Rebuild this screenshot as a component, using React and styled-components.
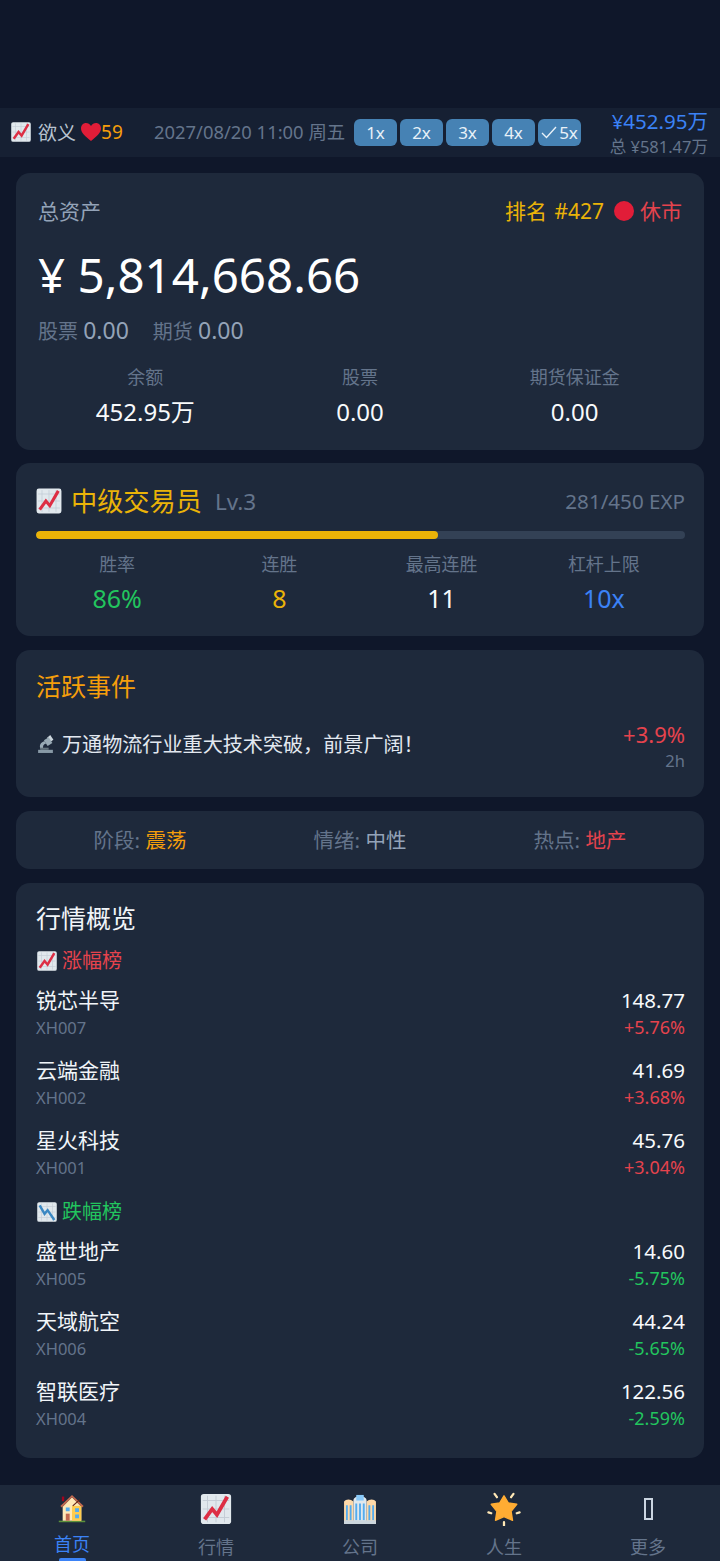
import React from 'react';
import styled, { createGlobalStyle } from 'styled-components';

const colors = {
  page: '#0f172a',
  bar: '#162033',
  card: '#1e293b',
  muted: '#64748b',
  slate: '#94a3b8',
  white: '#f1f5f9',
  gold: '#eab308',
  orange: '#f59e0b',
  red: '#e5434d',
  green: '#22c55e',
  blue: '#3b82f6',
  speed: '#4682b4',
};

const Global = createGlobalStyle`
  html, body { margin: 0; padding: 0; background: ${colors.page}; }
  body { font-family: "Noto Sans", "Noto Sans CJK SC", sans-serif; color: ${colors.white}; }
  * { box-sizing: border-box; }
`;

const Screen = styled.div`
  width: 720px; height: 1561px; display: flex; flex-direction: column; overflow: hidden;
  padding-top: 108px;
`;
const TopBar = styled.div`
  height: 49px; flex: none; background: ${colors.bar}; display: flex; align-items: center;
  padding: 0 12px 0 10px;
`;
const Player = styled.div`
  display: flex; align-items: center; gap: 6px; font-size: 19px; color: #b8c3d0; width: 144px; flex: none;
  padding-bottom: 2px;
`;
const Heart = styled.span`
  display: inline-flex; align-items: center; color: ${colors.orange}; margin-left: -1px;
`;
const GameDate = styled.div`
  font-size: 18.4px; color: ${colors.muted}; white-space: nowrap; width: 200px; flex: none; padding-bottom: 3px;
`;
const Speeds = styled.div`
  display: flex; gap: 3px; flex: none; padding-bottom: 1px;
`;
const Speed = styled.div`
  width: 43px; height: 27px; border-radius: 6px; background: ${colors.speed}; color: #e8f1f8;
  font-size: 17px; display: flex; align-items: center; justify-content: center; gap: 2px;
`;
const Funds = styled.div`
  margin-left: auto; text-align: right; display: flex; flex-direction: column; gap: 2px;
`;
const FundsMain = styled.div`
  font-size: 20.5px; line-height: 25px; color: ${colors.blue}; white-space: nowrap;
`;
const FundsTotal = styled.div`
  font-size: 16.5px; line-height: 21px; color: ${colors.muted}; white-space: nowrap;
`;

const Content = styled.div`
  flex: 1; padding: 16px 16px 0; display: flex; flex-direction: column; gap: 13.5px;
`;
const Card = styled.section`
  background: ${colors.card}; border-radius: 14px; padding: ${p => p.$pad || '20px'};
  height: ${p => p.$h}px; flex: none;
`;
const Between = styled.div`
  display: flex; align-items: center; justify-content: space-between;
`;
const Label = styled.div`
  font-size: 21px; line-height: 30px; color: ${colors.slate};
`;
const RankRow = styled.div`
  display: flex; align-items: center; gap: 10px; font-size: 21px; line-height: 30px;
`;
const Rank = styled.span`
  color: ${colors.gold}; word-spacing: 2px;
`;
const Closed = styled.span`
  display: inline-flex; align-items: center; gap: 6px; color: ${colors.red};
`;
const Dot = styled.i`
  width: 20px; height: 20px; border-radius: 50%; background: #e11d38; display: block;
`;
const Total = styled.div`
  font-size: 47.5px; line-height: 58px; margin-top: 20px; color: #fff; white-space: nowrap;
`;
const SubRow = styled.div`
  display: flex; gap: 24px; font-size: 20px; color: ${colors.muted}; margin-top: 11px; line-height: 30px;
`;
const SubValue = styled.span`
  color: ${colors.slate}; font-size: 23px;
`;
const Stats = styled.div`
  display: grid; grid-template-columns: repeat(${p => p.$n}, 1fr); margin-top: ${p => p.$top}px;
`;
const Stat = styled.div`
  text-align: center;
`;
const StatLabel = styled.div`
  font-size: 18px; line-height: 26px; color: ${colors.muted};
`;
const StatValue = styled.div`
  font-size: ${p => p.$size || 24}px; line-height: 32px; margin-top: ${p => p.$gap || 5}px; color: ${p => p.$color || '#f8fafc'};
`;
const LevelTitle = styled.div`
  display: flex; align-items: center; gap: 8px; margin-left: -1px;
`;
const LevelName = styled.span`
  font-size: 26.2px; line-height: 36px; color: ${colors.gold};
`;
const LevelNo = styled.span`
  font-size: 22.5px; color: ${colors.muted}; margin-left: 5px;
`;
const Exp = styled.span`
  font-size: 20.6px; color: ${colors.muted};
`;
const Track = styled.div`
  height: 8px; border-radius: 4px; background: #334155; margin-top: 12px; overflow: hidden;
`;
const Fill = styled.div`
  height: 100%; background: ${colors.gold}; border-radius: 4px;
`;
const SectionTitle = styled.h2`
  margin: 0; font-weight: 400; font-size: 25px; line-height: 34px; color: ${p => p.$color};
`;
const EventRow = styled.div`
  display: flex; justify-content: space-between; align-items: center; margin-top: 11px;
`;
const EventText = styled.div`
  display: flex; align-items: center; gap: 7px; font-size: 20.1px; color: #e2e8f0; height: 30px;
`;
const EventSide = styled.div`
  text-align: right; padding-top: 6px;
`;
const EventPct = styled.div`
  font-size: 22px; line-height: 28px; color: ${colors.red};
`;
const EventAge = styled.div`
  font-size: 16.5px; line-height: 26px; color: ${colors.muted};
`;
const MoodRow = styled.div`
  display: flex; justify-content: space-around; height: 100%; align-items: center; padding: 0 14px 2px;
  font-size: 20.5px; color: ${colors.muted};
`;
const MoodValue = styled.span`
  color: ${p => p.$color};
`;
const ListHead = styled.div`
  display: flex; align-items: center; gap: 4px; font-size: 20px; line-height: 30px; color: ${p => p.$color};
  margin-top: ${p => p.$top}px;
`;
const StockRow = styled.div`
  display: flex; justify-content: space-between; height: 70.4px; padding-top: 9px;
`;
const StockName = styled.div`
  font-size: 21px; line-height: 30px; color: #f1f5f9;
`;
const StockCode = styled.div`
  font-size: 16.5px; line-height: 25px; color: ${colors.muted};
`;
const StockSide = styled.div`
  text-align: right;
`;
const StockPrice = styled.div`
  font-size: 20.5px; line-height: 30px; color: #f8fafc;
`;
const StockPct = styled.div`
  font-size: 18px; line-height: 25px; color: ${p => p.$color};
`;
const Nav = styled.nav`
  height: 76px; flex: none; background: ${colors.card}; display: grid; grid-template-columns: repeat(5, 1fr);
`;
const NavItem = styled.div`
  position: relative; display: flex; flex-direction: column; align-items: center; padding-top: 7px;
  color: ${p => (p.$active ? colors.blue : colors.muted)};
`;
const NavIcon = styled.div`
  height: 34px; display: flex; align-items: center; justify-content: center;
`;
const NavLabel = styled.div`
  font-size: 18px; line-height: 24px; margin-top: ${p => (p.$active ? 6 : 9)}px;
`;
const NavMark = styled.i`
  position: absolute; left: 50%; bottom: 0; width: 27px; height: 3px; margin-left: -13px; border-radius: 2px 2px 0 0;
  background: ${colors.blue};
`;
const MissingGlyph = styled.i`
  display: block; width: 9px; height: 22px; border: 2px solid #cbd5e1;
`;

const Grid = () => (
  <g stroke="#c3ccd6" strokeWidth="1">
    <path d="M9 4v28M18 4v28M27 4v28M4 9h28M4 18h28M4 27h28" />
  </g>
);

const ChartUp = ({ size = 24 }) => (
  <svg width={size} height={size} viewBox="0 0 36 36">
    <rect x="2" y="2" width="32" height="32" rx="3" fill="#e1e8ed" />
    <Grid />
    <path d="M6 29l8-11 5 6 11-19" fill="none" stroke="#dd2e44" strokeWidth="4" strokeLinejoin="miter" />
  </svg>
);

const ChartDown = ({ size = 22 }) => (
  <svg width={size} height={size} viewBox="0 0 36 36">
    <rect x="2" y="2" width="32" height="32" rx="3" fill="#e1e8ed" />
    <Grid />
    <path d="M6 7l8 14 5-6 11 16" fill="none" stroke="#3b88c3" strokeWidth="4" />
  </svg>
);

const Scope = () => (
  <svg width="19" height="22" viewBox="0 0 36 36">
    <path d="M4 29h28v6H4z" fill="#8899a6" />
    <path d="M9 28c-4-7 0-14 8-15l2 4c-5 1-7 5-5 11z" fill="#99aab5" />
    <path d="M21 6l6-5 6 9-6 4z" fill="#ccd6dd" />
    <path d="M15 11l9-6 7 11-9 6z" fill="#99aab5" />
    <path d="M8 25h16v4H8z" fill="#66757f" />
  </svg>
);

const House = () => (
  <svg width="28" height="30" viewBox="0 0 36 36">
    <path d="M1 33h34v2H1z" fill="#5c913b" />
    <path d="M6 15L18 3l12 12v18H6z" fill="#ffe8b6" />
    <path d="M18 3L5 16l-2-2L18 0l15 14-2 2z" fill="#c1694f" />
    <path d="M18 14h12v19H18z" fill="#ffcc4d" />
    <path d="M10 24h5v9h-5z" fill="#c1694f" />
    <path d="M10 16h5v5h-5zM22 17h5v5h-5zM22 25h5v5h-5z" fill="#55acee" />
    <path d="M5 2h3v6H5z" fill="#a0041e" />
    <path d="M19 14l9-8" stroke="#662113" strokeWidth="1.5" />
  </svg>
);

const Office = () => (
  <svg width="34" height="30" viewBox="0 0 36 32">
    <path d="M1 8c2-3 7-3 10 0v24H1zM25 8c3-3 8-3 10 0v24H25z" fill="#ffd9a8" />
    <path d="M11 7c0-6 14-6 14 0v25H11z" fill="#e1e8ed" />
    <path d="M14 1h8v6h-8z" fill="#88c9f9" />
    <path d="M3 12h2v16H3zM7 12h2v16H7zM13 10h2v18h-2zM17 10h2v18h-2zM21 10h2v18h-2zM27 12h2v16h-2zM31 12h2v16h-2z" fill="#55acee" />
    <path d="M1 28h34v4H1z" fill="#ccd6dd" />
  </svg>
);

const Glow = () => (
  <svg width="34" height="34" viewBox="0 0 36 36">
    <path d="M18 4l4.500 7.500 9 1.500-6 7.500 1.500 9.500-9-4-9 4 1.500-9.500-6-7.500 9-1.500z" fill="#ffac33" stroke="#ffac33" strokeWidth="1.500" strokeLinejoin="round" />
    <path d="M18 32v3.500M1.500 21.500l3 1M34.500 21.500l-3 1M8 2l2.500 3.500M28 2l-2.500 3.500" stroke="#ffe8b6" strokeWidth="2.400" strokeLinecap="round" />
  </svg>
);

const Check = () => (
  <svg width="16" height="14" viewBox="0 0 16 14">
    <path d="M1 8l4.500 4.500L15 2" fill="none" stroke="#e8f1f8" strokeWidth="1.400" />
  </svg>
);

const HeartIcon = () => (
  <svg width="20" height="18" viewBox="0 0 20 18">
    <path d="M10 18C4 13 0 10 0 5.300C0 2.200 2.300 0 5 0c2 0 3.900 1 5 3 1.100-2 3-3 5-3 2.700 0 5 2.200 5 5.300C20 10 16 13 10 18z" fill="#e11d38" />
  </svg>
);

const gainers = [
  { name: '锐芯半导', code: 'XH007', price: '148.77', pct: '+5.76%' },
  { name: '云端金融', code: 'XH002', price: '41.69', pct: '+3.68%' },
  { name: '星火科技', code: 'XH001', price: '45.76', pct: '+3.04%' },
];
const losers = [
  { name: '盛世地产', code: 'XH005', price: '14.60', pct: '-5.75%' },
  { name: '天域航空', code: 'XH006', price: '44.24', pct: '-5.65%' },
  { name: '智联医疗', code: 'XH004', price: '122.56', pct: '-2.59%' },
];

const Stock = ({ s, color }) => (
  <StockRow>
    <div>
      <StockName>{s.name}</StockName>
      <StockCode>{s.code}</StockCode>
    </div>
    <StockSide>
      <StockPrice>{s.price}</StockPrice>
      <StockPct $color={color}>{s.pct}</StockPct>
    </StockSide>
  </StockRow>
);

export default function App() {
  return (
    <Screen>
      <Global />
      <TopBar>
        <Player>
          <ChartUp size={22} />
          <span>欲义</span>
          <Heart><HeartIcon />59</Heart>
        </Player>
        <GameDate>2027/08/20 11:00 周五</GameDate>
        <Speeds>
          <Speed>1x</Speed>
          <Speed>2x</Speed>
          <Speed>3x</Speed>
          <Speed>4x</Speed>
          <Speed><Check />5x</Speed>
        </Speeds>
        <Funds>
          <FundsMain>¥452.95万</FundsMain>
          <FundsTotal>总 ¥581.47万</FundsTotal>
        </Funds>
      </TopBar>
      <Content>
        <Card $h={276.5} $pad="23px 22px">
          <Between>
            <Label>总资产</Label>
            <RankRow>
              <Rank>排名 #427</Rank>
              <Closed><Dot />休市</Closed>
            </RankRow>
          </Between>
          <Total>¥ 5,814,668.66</Total>
          <SubRow>
            <span>股票 <SubValue>0.00</SubValue></span>
            <span>期货 <SubValue>0.00</SubValue></span>
          </SubRow>
          <Stats $n={3} $top={17}>
            <Stat><StatLabel>余额</StatLabel><StatValue $gap={6}>452.95万</StatValue></Stat>
            <Stat><StatLabel>股票</StatLabel><StatValue $gap={6}>0.00</StatValue></Stat>
            <Stat><StatLabel>期货保证金</StatLabel><StatValue $gap={6}>0.00</StatValue></Stat>
          </Stats>
        </Card>
        <Card $h={173} $pad="20px 19px 20px 20px">
          <Between>
            <LevelTitle>
              <ChartUp size={28} />
              <LevelName>中级交易员</LevelName>
              <LevelNo>Lv.3</LevelNo>
            </LevelTitle>
            <Exp>281/450 EXP</Exp>
          </Between>
          <Track><Fill style={{ width: '62%' }} /></Track>
          <Stats $n={4} $top={12}>
            <Stat><StatLabel>胜率</StatLabel><StatValue $size={25} $color={colors.green}>86%</StatValue></Stat>
            <Stat><StatLabel>连胜</StatLabel><StatValue $size={25} $color={colors.gold}>8</StatValue></Stat>
            <Stat><StatLabel>最高连胜</StatLabel><StatValue $size={25}>11</StatValue></Stat>
            <Stat><StatLabel>杠杆上限</StatLabel><StatValue $size={25} $color={colors.blue}>10x</StatValue></Stat>
          </Stats>
        </Card>
        <Card $h={147.5} $pad="19px 19px 20px 20px">
          <SectionTitle $color={colors.orange}>活跃事件</SectionTitle>
          <EventRow>
            <EventText><Scope />万通物流行业重大技术突破，前景广阔！</EventText>
            <EventSide>
              <EventPct>+3.9%</EventPct>
              <EventAge>2h</EventAge>
            </EventSide>
          </EventRow>
        </Card>
        <Card $h={58.5} $pad="0">
          <MoodRow>
            <span>阶段: <MoodValue $color={colors.orange}>震荡</MoodValue></span>
            <span>情绪: <MoodValue $color={colors.slate}>中性</MoodValue></span>
            <span>热点: <MoodValue $color={colors.red}>地产</MoodValue></span>
          </MoodRow>
        </Card>
        <Card $h={575} $pad="18px 19px 20px 20px">
          <SectionTitle $color="#f1f5f9">行情概览</SectionTitle>
          <ListHead $color={colors.red} $top={11}><ChartUp size={22} />涨幅榜</ListHead>
          {gainers.map(s => <Stock key={s.code} s={s} color={colors.red} />)}
          <ListHead $color={colors.green} $top={10}><ChartDown />跌幅榜</ListHead>
          {losers.map(s => <Stock key={s.code} s={s} color={colors.green} />)}
        </Card>
      </Content>
      <Nav>
        <NavItem $active>
          <NavIcon><House /></NavIcon>
          <NavLabel $active>首页</NavLabel>
          <NavMark />
        </NavItem>
        <NavItem>
          <NavIcon><ChartUp size={34} /></NavIcon>
          <NavLabel>行情</NavLabel>
        </NavItem>
        <NavItem>
          <NavIcon><Office /></NavIcon>
          <NavLabel>公司</NavLabel>
        </NavItem>
        <NavItem>
          <NavIcon><Glow /></NavIcon>
          <NavLabel>人生</NavLabel>
        </NavItem>
        <NavItem>
          <NavIcon><MissingGlyph /></NavIcon>
          <NavLabel>更多</NavLabel>
        </NavItem>
      </Nav>
    </Screen>
  );
}
